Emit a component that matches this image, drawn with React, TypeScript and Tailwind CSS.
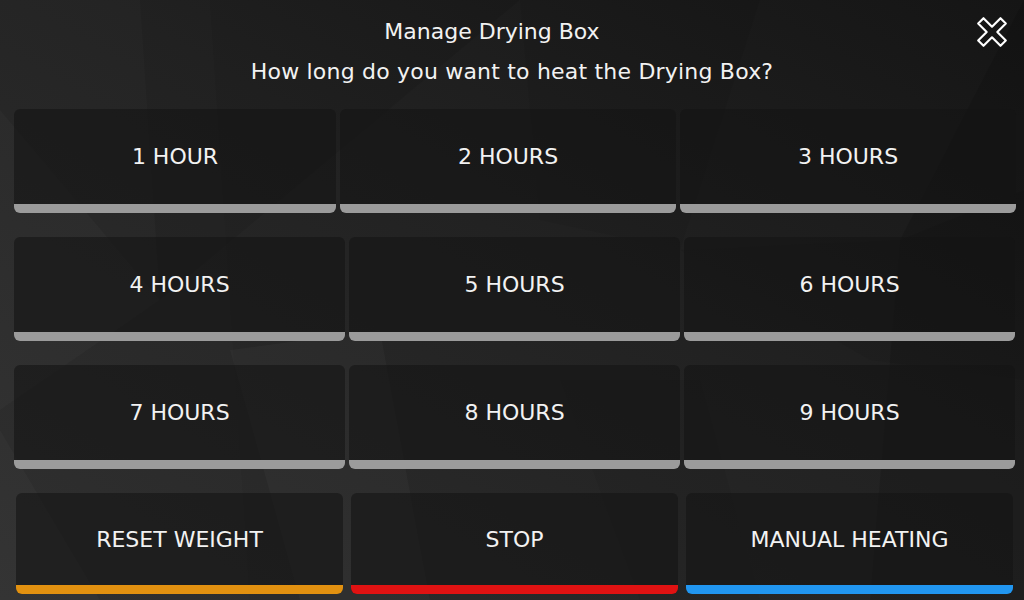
import React from "react";

type Tile = { label: string; bar: string };

const hours: Tile[] = [1, 2, 3, 4, 5, 6, 7, 8, 9].map((n) => ({
  label: n === 1 ? "1 HOUR" : `${n} HOURS`,
  bar: "bg-[#9b9b9b]",
}));

const actions: Tile[] = [
  { label: "RESET WEIGHT", bar: "bg-[#e29110]" },
  { label: "STOP", bar: "bg-[#e01212]" },
  { label: "MANUAL HEATING", bar: "bg-[#2196f0]" },
];

function TileButton({ tile, height }: { tile: Tile; height: string }) {
  return (
    <button
      className={`flex flex-col overflow-hidden rounded-[6px] bg-[#141414]/60 ${height}`}
    >
      <span className="flex flex-1 items-center justify-center text-[22px] text-[#f2f2f2]">
        {tile.label}
      </span>
      <span className={`h-[9px] w-full ${tile.bar}`} />
    </button>
  );
}

function CloseIcon() {
  return (
    <svg width="34" height="34" viewBox="0 0 32 32" fill="none">
      <polygon
        points="16,11 24,3 29,8 21,16 29,24 24,29 16,21 8,29 3,24 11,16 3,8 8,3"
        stroke="white"
        strokeWidth="2"
        strokeLinejoin="round"
      />
    </svg>
  );
}

// faceted dark backdrop
function Backdrop() {
  return (
    <svg className="absolute inset-0 h-full w-full" viewBox="0 0 1024 600" preserveAspectRatio="none">
      <defs>
        <linearGradient id="bg" x1="0" y1="1" x2="1" y2="0">
          <stop offset="0" stopColor="#2e2e2e" />
          <stop offset="0.55" stopColor="#222222" />
          <stop offset="1" stopColor="#151515" />
        </linearGradient>
      </defs>
      <rect width="1024" height="600" fill="url(#bg)" />
      <polygon points="0,0 210,0 250,600 0,600" fill="#ffffff" opacity="0.012" />
      <polygon points="140,0 520,0 160,300" fill="#000000" opacity="0.08" />
      <polygon points="0,110 160,300 0,410" fill="#ffffff" opacity="0.02" />
      <polygon points="520,0 760,0 680,250 540,220" fill="#000000" opacity="0.05" />
      <polygon points="1024,0 1024,600 870,600 900,240" fill="#000000" opacity="0.12" />
      <polygon points="680,250 900,240 1024,190 1024,380 870,360" fill="#000000" opacity="0.06" />
      <polygon points="230,350 300,600 430,600 380,330" fill="#ffffff" opacity="0.025" />
      <polygon points="560,380 640,600 760,600 700,380" fill="#000000" opacity="0.05" />
      <polygon points="0,430 100,600 0,600" fill="#ffffff" opacity="0.02" />
    </svg>
  );
}

export default function App() {
  return (
    <div className="relative h-[600px] w-[1024px] overflow-hidden font-['DejaVu_Sans',sans-serif] text-white">
      <Backdrop />
      <div className="relative flex h-full flex-col">
        <div className="relative flex h-[109px] flex-col items-center pt-[17px] text-[22px] leading-[30px] text-[#f2f2f2]">
          <div className="pr-[40px]">Manage Drying Box</div>
          <div className="mt-[10px] tracking-[0.2px]">How long do you want to heat the Drying Box?</div>
          <div className="absolute right-[15px] top-[15px]">
            <CloseIcon />
          </div>
        </div>

        <div className="ml-[14px] grid grid-cols-[322px_336px_336px] gap-x-[4px]">
          {hours.slice(0, 3).map((t) => (
            <TileButton key={t.label} tile={t} height="h-[104px]" />
          ))}
        </div>

        <div className="ml-[14px] mt-[24px] grid grid-cols-[331px_331px_331px] gap-x-[4px] gap-y-[24px]">
          {hours.slice(3).map((t) => (
            <TileButton key={t.label} tile={t} height="h-[104px]" />
          ))}
        </div>

        <div className="ml-[16px] mt-[24px] grid grid-cols-[327px_327px_327px] gap-x-[8px]">
          {actions.map((t) => (
            <TileButton key={t.label} tile={t} height="h-[101px]" />
          ))}
        </div>
      </div>
    </div>
  );
}
